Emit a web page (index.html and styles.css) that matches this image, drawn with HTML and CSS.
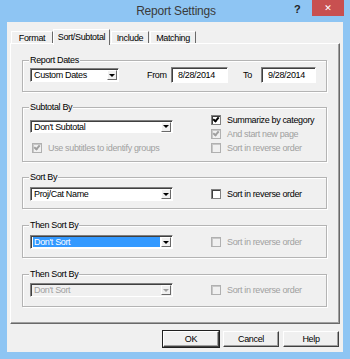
FILE: index.html
```html
<!DOCTYPE html>
<html lang="en">
<head>
    <meta charset="UTF-8">
    <title>Report Settings</title>
    <link rel="stylesheet" href="styles.css">
</head>
<body>
<div class="window">
    <div class="titlebar">
        <span class="title">Report Settings</span>
        <span class="help">?</span>
        <span class="close">&#x2715;</span>
    </div>

    <div class="client">
        <div class="tabs">
            <span class="tab t-format">Format</span>
            <span class="tab t-sort active">Sort/Subtotal</span>
            <span class="tab t-include">Include</span>
            <span class="tab t-matching">Matching</span>
        </div>

        <div class="panel">
            <!-- Report Dates -->
            <div class="group g-dates">
                <span class="legend">Report Dates</span>
                <div class="row">
                    <div class="combo short"><span class="value">Custom Dates</span><span class="arrow"></span></div>
                    <span class="lbl from">From</span>
                    <span class="edit e-from">8/28/2014</span>
                    <span class="lbl to">To</span>
                    <span class="edit e-to">9/28/2014</span>
                </div>
            </div>

            <!-- Subtotal By -->
            <div class="group g-subtotal">
                <span class="legend">Subtotal By</span>
                <div class="cols">
                    <div class="left-col">
                        <div class="combo"><span class="value">Don't Subtotal</span><span class="arrow"></span></div>
                        <label class="check disabled sub-check"><span class="box checked"></span>Use subtitles to identify groups</label>
                    </div>
                    <div class="right-col">
                        <label class="check"><span class="box checked"></span>Summarize by category</label>
                        <label class="check disabled"><span class="box checked"></span>And start new page</label>
                        <label class="check disabled"><span class="box"></span>Sort in reverse order</label>
                    </div>
                </div>
            </div>

            <!-- Sort By -->
            <div class="group g-sort">
                <span class="legend">Sort By</span>
                <div class="row">
                    <div class="combo"><span class="value">Proj/Cat Name</span><span class="arrow"></span></div>
                    <label class="check side"><span class="box"></span>Sort in reverse order</label>
                </div>
            </div>

            <!-- Then Sort By -->
            <div class="group g-then1">
                <span class="legend">Then Sort By</span>
                <div class="row">
                    <div class="combo focused"><span class="value">Don't Sort</span><span class="arrow"></span></div>
                    <label class="check side disabled"><span class="box"></span>Sort in reverse order</label>
                </div>
            </div>

            <!-- Then Sort By (disabled) -->
            <div class="group g-then2">
                <span class="legend">Then Sort By</span>
                <div class="row">
                    <div class="combo off"><span class="value">Don't Sort</span><span class="arrow"></span></div>
                    <label class="check side disabled"><span class="box"></span>Sort in reverse order</label>
                </div>
            </div>
        </div>

        <div class="buttons">
            <button class="btn default">OK</button>
            <button class="btn">Cancel</button>
            <button class="btn">Help</button>
        </div>
    </div>
</div>
</body>
</html>
```

FILE: styles.css
```css
body {
    margin: 0;
    padding: 0;
    font-family: "Liberation Sans", Arial, sans-serif;
    font-size: 9px;
    letter-spacing: -0.35px;
    color: #000;
}

.window {
    width: 350px;
    height: 359px;
    box-sizing: border-box;
    background-color: #8ec5f3;
    padding: 0 7px 7px 7px;
}

/* title bar */
.titlebar {
    height: 22px;
    display: flex;
    align-items: flex-start;
    padding-left: 51px;
}

.title {
    flex: 1;
    text-align: center;
    font-size: 12px;
    letter-spacing: -0.2px;
    line-height: 15px;
    padding-top: 4px;
    color: #3a3a3a;
}

.help {
    width: 10px;
    margin-right: 8px;
    padding-top: 3px;
    font-weight: bold;
    font-size: 11px;
    letter-spacing: 0;
    color: #222;
}

.close {
    width: 32px;
    height: 16px;
    margin-right: -1px;
    background-color: #c85050;
    color: #fff;
    text-align: center;
    font-family: "DejaVu Sans", sans-serif;
    font-size: 9px;
    letter-spacing: 0;
    font-weight: bold;
    line-height: 16px;
}

/* dialog body */
.client {
    height: 330px;
    background-color: #f0f0f0;
    padding: 7px 0 0 3px;
    box-sizing: border-box;
}

.tabs {
    display: flex;
    align-items: flex-end;
    height: 14px;
    position: relative;
    z-index: 1;
}

.tab {
    height: 12px;
    line-height: 12px;
    box-sizing: border-box;
    text-align: center;
    border-left: 1px solid #fff;
    border-top: 1px solid #fff;
    border-right: 1px solid #696969;
    background-color: #f0f0f0;
}

.t-format { width: 42px; margin-left: 1px; }
.t-include { width: 38px; margin-left: 1px; }
.t-matching { width: 46px; margin-left: 1px; }

.tab.active {
    width: 57px;
    height: 16px;
    line-height: 14px;
    margin-bottom: -2px;
    padding-bottom: 2px;
}

.panel {
    width: 330px;
    height: 281px;
    box-sizing: border-box;
    border-top: 1px solid #fff;
    border-left: 1px solid #fff;
    border-right: 1px solid #696969;
    border-bottom: 1px solid #696969;
    box-shadow: inset -1px -1px 0 #a0a0a0;
    padding: 0 0 0 11px;
}

/* group boxes */
.group {
    position: relative;
    width: 305px;
    box-sizing: border-box;
    border: 1px solid #b4b4b4;
    box-shadow: inset 1px 1px 0 #fff, 1px 1px 0 #fff;
    padding-left: 7px;
}

.legend {
    position: absolute;
    top: -7px;
    left: 6px;
    padding: 0 1px;
    line-height: 12px;
    background-color: #f0f0f0;
}

.g-dates { margin-top: 16px; height: 32px; padding-top: 6px; }
.g-subtotal { margin-top: 15px; height: 55px; }
.g-sort { margin-top: 15px; height: 32px; padding-top: 9px; }
.g-then1 { margin-top: 16px; height: 33px; padding-top: 9px; }
.g-then2 { margin-top: 16px; height: 33px; padding-top: 8px; }

.row {
    display: flex;
    align-items: center;
    height: 16px;
}

.g-sort .row, .g-then1 .row, .g-then2 .row { height: 14px; }

/* combo boxes */
.combo {
    width: 143px;
    height: 14px;
    box-sizing: border-box;
    display: flex;
    align-items: center;
    background-color: #fff;
    border-top: 1px solid #808080;
    border-left: 1px solid #808080;
    border-right: 1px solid #fff;
    border-bottom: 1px solid #fff;
    box-shadow: inset 1px 1px 0 #404040;
    padding: 1px 1px 1px 2px;
}

.combo.short { width: 89px; }

.combo .value {
    flex: 1;
    height: 10px;
    line-height: 10px;
    padding-left: 1px;
    white-space: nowrap;
}

.combo .arrow {
    width: 10px;
    height: 10px;
    box-sizing: border-box;
    background-color: #f0f0f0;
    border-top: 1px solid #fff;
    border-left: 1px solid #fff;
    border-right: 1px solid #696969;
    border-bottom: 1px solid #696969;
    display: flex;
    align-items: center;
    justify-content: center;
}

.combo .arrow::after {
    content: "";
    border-left: 3px solid transparent;
    border-right: 3px solid transparent;
    border-top: 3px solid #000;
}

.combo.focused .value {
    background-color: #3399ff;
    color: #fff;
    margin-right: 1px;
}

.combo.off {
    background-color: #f0f0f0;
    color: #a0a0a0;
}

.combo.off .arrow::after { border-top-color: #a0a0a0; }

/* date edits */
.lbl { white-space: nowrap; }
.from { margin-left: 28px; width: 24px; }
.to { margin-left: 15px; width: 18px; }

.edit {
    height: 16px;
    box-sizing: border-box;
    border-top: 1px solid #808080;
    border-left: 1px solid #808080;
    border-right: 1px solid #fff;
    border-bottom: 1px solid #fff;
    box-shadow: inset 1px 1px 0 #404040;
    background-color: #fff;
    line-height: 14px;
    padding-left: 6px;
}

.e-from { width: 57px; }
.e-to { width: 55px; }

/* check boxes */
.cols {
    display: flex;
}

.left-col {
    width: 143px;
    padding-top: 12px;
}

.left-col .combo { height: 13px; }

.sub-check { margin-top: 8px; padding-left: 2px; }

.right-col {
    margin-left: 38px;
    padding-top: 5px;
}

.check {
    display: flex;
    align-items: center;
    height: 14px;
    white-space: nowrap;
}

.check.side { margin-left: 38px; }

.box {
    width: 8px;
    height: 8px;
    margin-right: 6px;
    background-color: #fff;
    border: 1px solid #808080;
    box-shadow: inset 1px 1px 0 #404040;
    position: relative;
}

.box.checked::after {
    content: "";
    position: absolute;
    left: 2px;
    top: 0px;
    width: 2px;
    height: 4px;
    border-right: 2px solid #000;
    border-bottom: 2px solid #000;
    transform: rotate(40deg);
}

.check.disabled { color: #a0a0a0; }

.check.disabled .box {
    background-color: #f0f0f0;
    border-color: #b0b0b0;
    box-shadow: inset 1px 1px 0 #c8c8c8;
}

.check.disabled .box.checked::after {
    border-color: #a0a0a0;
}

/* bottom buttons */
.buttons {
    display: flex;
    justify-content: flex-end;
    gap: 4px;
    margin-top: 7px;
    padding-right: 4px;
}

.btn {
    width: 56px;
    height: 16px;
    padding: 0;
    font-family: inherit;
    font-size: 9px;
    letter-spacing: -0.35px;
    color: #000;
    background-color: #f0f0f0;
    border-top: 1px solid #fff;
    border-left: 1px solid #fff;
    border-right: 1px solid #404040;
    border-bottom: 1px solid #404040;
    box-shadow: inset -1px -1px 0 #a0a0a0;
}

.btn.default {
    outline: 1px solid #202020;
    outline-offset: 0;
}
```
